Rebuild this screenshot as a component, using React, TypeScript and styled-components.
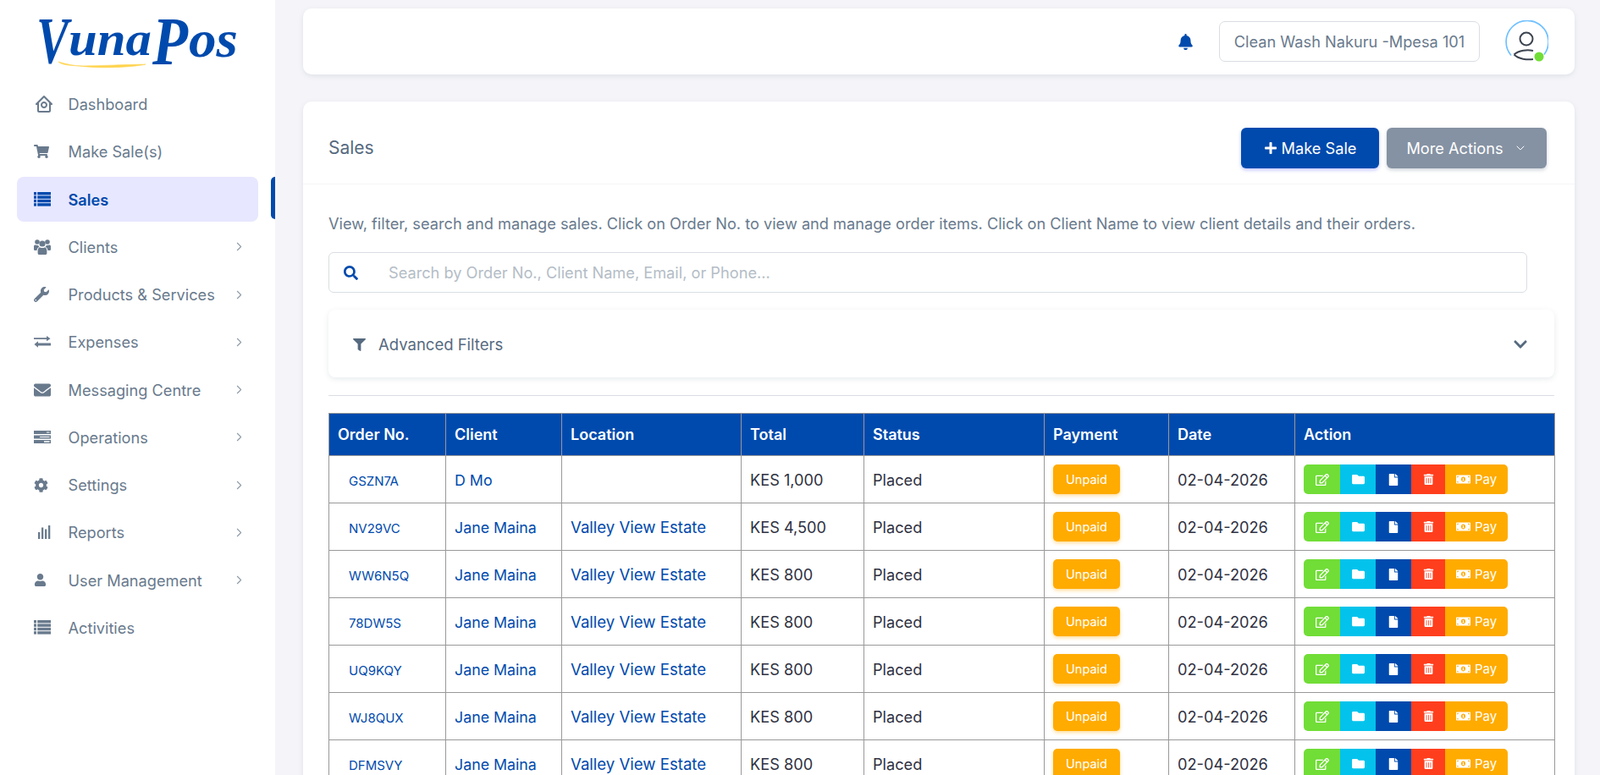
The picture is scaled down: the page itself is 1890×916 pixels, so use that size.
import React from 'react'
import styled, { createGlobalStyle } from 'styled-components'
import { BiHomeCircle } from 'react-icons/bi'
import { ChevronRight, ChevronDown } from 'lucide-react'
import {
  FaShoppingCart,
  FaWrench,
  FaEnvelope,
  FaCog,
  FaUser,
  FaSearch,
  FaFilter,
  FaBell,
  FaPlus,
  FaFolder,
  FaFile,
  FaTrashAlt,
  FaMoneyBillAlt,
  FaRegEdit,
  FaChevronDown,
} from 'react-icons/fa'

const PRIMARY = '#004aad'
const FONT = `Inter, "Open Sans", sans-serif`

const GlobalStyle = createGlobalStyle`
  * { box-sizing: border-box; }
  html, body { margin: 0; height: 100%; overflow: hidden; }
  body { background: #f5f5f9; font-family: ${FONT}; color: #697a8d; }
`

const ListIcon = () => (
  <svg width='20' height='17' viewBox='0 0 20 17' fill='currentColor'>
    {[0, 4.4, 8.8, 13.2].map((y) => (
      <g key={y}>
        <rect x='0' y={y} width='3' height='3.4' />
        <rect x='4.2' y={y} width='15.8' height='3.4' />
      </g>
    ))}
  </svg>
)

const UsersIcon = () => (
  <svg width='20' height='20' viewBox='0 0 20 20' fill='currentColor'>
    <circle cx='4' cy='4' r='2.8' />
    <circle cx='16' cy='4' r='2.8' />
    <circle cx='10' cy='6' r='3.6' />
    <path d='M0 9.2C0 7.8 1 7.2 2 7.5c1.2.5 2.3.5 3 .2.4 1 1 1.6 1.4 2C4.6 10.6 3.7 12 3.5 14H1c-.7 0-1-.5-1-1.2Z' />
    <path d='M20 9.2c0-1.4-1-2-2-1.7-1.2.5-2.3.5-3 .2-.4 1-1 1.6-1.4 2 1.8.9 2.7 2.3 2.9 4.3H19c.7 0 1-.5 1-1.2Z' />
    <path d='M4.6 14.8c0-2.6 1-4.2 2.3-4.6 1.9 1.2 4.3 1.2 6.2 0 1.3.4 2.3 2 2.3 4.6v2.4c0 1-.8 1.8-1.8 1.8H6.4c-1 0-1.8-.8-1.8-1.8Z' />
  </svg>
)

const ExchangeIcon = () => (
  <svg width='20' height='14' viewBox='0 0 20 14' fill='currentColor'>
    <path d='M0 2.2h15V0l4.5 3.2L15 6.2V4H0Z' />
    <path d='M20 8.2H5V6L.5 9.9 5 13.6v-2.2h15Z' transform='translate(0 .2)' />
  </svg>
)

const ServerIcon = () => (
  <svg width='20' height='15' viewBox='0 0 20 15' fill='currentColor'>
    <path d='M0 0h20v4H15v-1.4h3.6V1.4H15V4H0Z' />
    <path d='M0 5.5h20v4h-7V8h5.6V6.9H7v1.2h6v1.4H0Z' />
    <path d='M0 11h20v4H0Zm12 1.2v1.5h6.6v-1.5Z' fillRule='evenodd' />
  </svg>
)

const ReportsIcon = () => (
  <svg width='20' height='18' viewBox='0 0 20 18' fill='currentColor'>
    <rect x='5' y='9' width='2.3' height='8' />
    <rect x='9' y='3.5' width='2.3' height='13.5' />
    <rect x='13' y='5.5' width='2.3' height='11.5' />
    <rect x='17' y='1' width='2.3' height='16' />
  </svg>
)

const menu = [
  { label: 'Dashboard', icon: <BiHomeCircle size={24} /> },
  { label: 'Make Sale(s)', icon: <FaShoppingCart size={18} /> },
  { label: 'Sales', icon: <ListIcon />, active: true },
  { label: 'Clients', icon: <UsersIcon />, sub: true },
  { label: 'Products & Services', icon: <FaWrench size={18} />, sub: true },
  { label: 'Expenses', icon: <ExchangeIcon />, sub: true },
  { label: 'Messaging Centre', icon: <FaEnvelope size={20} />, sub: true },
  { label: 'Operations', icon: <ServerIcon />, sub: true },
  { label: 'Settings', icon: <FaCog size={17} />, sub: true },
  { label: 'Reports', icon: <ReportsIcon />, sub: true },
  { label: 'User Management', icon: <FaUser size={15} />, sub: true },
  { label: 'Activities', icon: <ListIcon /> },
]

const rows = [
  ['GSZN7A', 'D Mo', '', 'KES 1,000'],
  ['NV29VC', 'Jane Maina', 'Valley View Estate', 'KES 4,500'],
  ['WW6N5Q', 'Jane Maina', 'Valley View Estate', 'KES 800'],
  ['78DW5S', 'Jane Maina', 'Valley View Estate', 'KES 800'],
  ['UQ9KQY', 'Jane Maina', 'Valley View Estate', 'KES 800'],
  ['WJ8QUX', 'Jane Maina', 'Valley View Estate', 'KES 800'],
  ['DFMSVY', 'Jane Maina', 'Valley View Estate', 'KES 800'],
]

const columns = [
  ['Order No.', 138],
  ['Client', 137],
  ['Location', 212],
  ['Total', 145],
  ['Status', 213],
  ['Payment', 147],
  ['Date', 149],
  ['Action', 307],
] as const

const Logo = () => (
  <LogoSvg viewBox='0 0 238 60' width='238' height='60'>
    <g fill={PRIMARY} fontFamily='"Liberation Serif", serif' fontStyle='italic' fontWeight='700'>
      <text x='0' y='54' fontSize='78' textLength='38' lengthAdjust='spacingAndGlyphs'>V</text>
      <text x='38' y='45' fontSize='58' textLength='98' lengthAdjust='spacingAndGlyphs'>una</text>
      <text x='137' y='56' fontSize='80' textLength='42' lengthAdjust='spacingAndGlyphs'>P</text>
      <text x='180' y='47' fontSize='62' textLength='58' lengthAdjust='spacingAndGlyphs'>os</text>
    </g>
    <path d='M26 53 C34 61 70 57 129 56 C118 59 60 64 26 53 Z' fill='#ffd34d' stroke='#ffd34d' strokeWidth='.6' />
  </LogoSvg>
)

const Avatar = () => (
  <AvatarWrap>
    <svg width='51' height='51' viewBox='0 0 51 51' fill='none'>
      <path d='M7 41.5 A25 25 0 1 1 46 40.5' stroke='#6fc0ff' strokeWidth='1.7' />
      <circle cx='25' cy='22' r='7.5' stroke='#3c4350' strokeWidth='2' />
      <path d='M10.5 40.5 C16 35.5 26 34.5 33 36 M10.5 40.5 C16 46 26 47 33 46' stroke='#3c4350' strokeWidth='2' />
      <circle cx='40' cy='43' r='5.5' fill='#71dd37' />
    </svg>
  </AvatarWrap>
)

const App: React.FC = () => (
  <>
    <GlobalStyle />
    <Shell>
      <Sidebar>
        <LogoBox>
          <Logo />
        </LogoBox>
        <Menu>
          {menu.map((m) => (
            <MenuItem key={m.label} $active={m.active}>
              <MenuIcon>{m.icon}</MenuIcon>
              <span>{m.label}</span>
              {m.sub && (
                <MenuArrow>
                  <ChevronRight size={17} strokeWidth={1.5} />
                </MenuArrow>
              )}
            </MenuItem>
          ))}
        </Menu>
      </Sidebar>

      <Main>
        <TopBar>
          <BellBtn>
            <FaBell size={19} />
          </BellBtn>
          <StoreBox>Clean Wash Nakuru -Mpesa 101</StoreBox>
          <Avatar />
        </TopBar>

        <Card>
          <CardHeader>
            <CardTitle>Sales</CardTitle>
            <HeaderActions>
              <MakeSaleBtn>
                <FaPlus size={16} />
                Make Sale
              </MakeSaleBtn>
              <MoreBtn>
                More Actions
                <ChevronDown size={16} strokeWidth={1.5} />
              </MoreBtn>
            </HeaderActions>
          </CardHeader>

          <CardBody>
            <Intro>
              View, filter, search and manage sales. Click on Order No. to view and manage order items. Click on Client
              Name to view client details and their orders.
            </Intro>

            <SearchBox>
              <SearchIcon>
                <FaSearch size={17} />
              </SearchIcon>
              <SearchInput placeholder='Search by Order No., Client Name, Email, or Phone...' />
            </SearchBox>

            <FilterPanel>
              <FilterLabel>
                <FaFilter size={15} />
                Advanced Filters
              </FilterLabel>
              <FaChevronDown size={18} />
            </FilterPanel>

            <Rule />

            <SalesTable>
              <colgroup>
                {columns.map(([name, width]) => (
                  <col key={name} width={width} />
                ))}
              </colgroup>
              <thead>
                <tr>
                  {columns.map(([name]) => (
                    <th key={name}>{name}</th>
                  ))}
                </tr>
              </thead>
              <tbody>
                {rows.map(([order, client, location, total]) => (
                  <tr key={order}>
                    <td>
                      <OrderLink>{order}</OrderLink>
                    </td>
                    <td>
                      <ClientLink>{client}</ClientLink>
                    </td>
                    <td>
                      <CellLink>{location}</CellLink>
                    </td>
                    <td>{total}</td>
                    <td>Placed</td>
                    <td>
                      <UnpaidBadge>Unpaid</UnpaidBadge>
                    </td>
                    <td>02-04-2026</td>
                    <td>
                      <ActionGroup>
                        <ActionBtn $bg='#71dd37' $w={43}>
                          <FaRegEdit size={16} />
                        </ActionBtn>
                        <ActionBtn $bg='#03c3ec' $w={42}>
                          <FaFolder size={15} />
                        </ActionBtn>
                        <ActionBtn $bg={PRIMARY} $w={42}>
                          <FaFile size={14} />
                        </ActionBtn>
                        <ActionBtn $bg='#ff3e1d' $w={40}>
                          <FaTrashAlt size={13} />
                        </ActionBtn>
                        <ActionBtn $bg='#ffab00' $w={74}>
                          <FaMoneyBillAlt size={17} />
                          Pay
                        </ActionBtn>
                      </ActionGroup>
                    </td>
                  </tr>
                ))}
              </tbody>
            </SalesTable>
          </CardBody>
        </Card>
      </Main>
    </Shell>
  </>
)

export default App

const Shell = styled.div`
  display: flex;
  height: 100vh;
  overflow: hidden;
`

const Sidebar = styled.aside`
  flex: 0 0 325px;
  background: #fff;
  padding: 0 20px;
`

const LogoBox = styled.div`
  height: 96.5px;
  padding: 20px 0 0 23px;
`

const LogoSvg = styled.svg`
  display: block;
  overflow: visible;
`

const Menu = styled.nav`
  display: flex;
  flex-direction: column;
  gap: 3.25px;
`

const MenuItem = styled.div<{ $active?: boolean }>`
  position: relative;
  display: flex;
  align-items: center;
  height: 53px;
  padding: 0 14px 0 20px;
  border-radius: 8px;
  font-size: 18.2px;
  font-weight: ${({ $active }) => ($active ? 600 : 400)};
  color: ${({ $active }) => ($active ? PRIMARY : '#697a8d')};
  background: ${({ $active }) => ($active ? '#e7e7ff' : 'transparent')};

  ${({ $active }) =>
    $active &&
    `
    &::after {
      content: '';
      position: absolute;
      top: 0;
      right: -20px;
      width: 5px;
      height: 50px;
      background: ${PRIMARY};
      border-radius: 5px 0 0 5px;
    }
  `}
`

const MenuIcon = styled.span`
  flex: 0 0 40.5px;
  display: flex;
  align-items: center;
`

const MenuArrow = styled.span`
  margin-left: auto;
  display: flex;
  color: #8d9aa8;
`

const Main = styled.main`
  flex: 1;
  min-width: 0;
  padding: 10px 30px 0 33px;
`

const TopBar = styled.header`
  display: flex;
  align-items: center;
  justify-content: flex-end;
  height: 78px;
  padding: 0 31px 0 0;
  background: #fff;
  border-radius: 10px;
  box-shadow: 0 2px 6px rgba(67, 89, 113, 0.12);
`

const BellBtn = styled.span`
  display: flex;
  margin-right: 30px;
  color: ${PRIMARY};
`

const StoreBox = styled.div`
  width: 308px;
  height: 48px;
  margin-right: 30px;
  border: 1px solid #d9dee3;
  border-radius: 7px;
  display: flex;
  align-items: center;
  justify-content: center;
  font-size: 18.2px;
  color: #697a8d;
`

const AvatarWrap = styled.div`
  display: flex;
  width: 51px;
  height: 51px;
`

const Card = styled.section`
  margin-top: 32px;
  background: #fff;
  border-radius: 10px;
  box-shadow: 0 2px 6px rgba(67, 89, 113, 0.12);
`

const CardHeader = styled.div`
  display: flex;
  align-items: center;
  justify-content: space-between;
  height: 98px;
  padding: 12px 33px 0 30px;
  border-bottom: 1px solid #f5f5f9;
`

const CardTitle = styled.h5`
  margin: 0;
  font-size: 21px;
  font-weight: 400;
  color: #566a7f;
`

const HeaderActions = styled.div`
  display: flex;
  gap: 9px;
`

const HeaderBtn = styled.button`
  display: flex;
  align-items: center;
  justify-content: center;
  height: 48px;
  border: 0;
  border-radius: 6px;
  color: #fff;
  font-family: ${FONT};
  font-size: 18.2px;
`

const MakeSaleBtn = styled(HeaderBtn)`
  width: 163px;
  gap: 5px;
  background: ${PRIMARY};
  box-shadow: 0 2px 4px rgba(105, 108, 255, 0.4);
`

const MoreBtn = styled(HeaderBtn)`
  width: 189px;
  gap: 12px;
  background: #8592a3;
  box-shadow: 0 2px 4px rgba(133, 146, 163, 0.4);
`

const CardBody = styled.div`
  padding: 32px 24px 0 30px;
`

const Intro = styled.p`
  margin: 0;
  font-size: 18.2px;
  line-height: 29px;
  padding-bottom: 1px;
  color: #697a8d;
`

const SearchBox = styled.div`
  display: flex;
  align-items: center;
  width: 1416px;
  height: 48px;
  margin-top: 18px;
  border: 1px solid #d9dee3;
  border-radius: 6px;
`

const SearchIcon = styled.span`
  flex: 0 0 68px;
  display: flex;
  padding-left: 17px;
  color: ${PRIMARY};
`

const SearchInput = styled.input`
  flex: 1;
  border: 0;
  outline: 0;
  padding: 0 2px;
  background: transparent;
  font-family: ${FONT};
  font-size: 18.2px;
  color: #697a8d;

  &::placeholder {
    color: #b4bdc6;
  }
`

const FilterPanel = styled.div`
  display: flex;
  align-items: center;
  justify-content: space-between;
  height: 80px;
  margin-top: 20px;
  padding: 2px 31px 0 29px;
  border-radius: 8px;
  background: #fff;
  color: #566a7f;
  box-shadow: 0 2px 6px rgba(67, 89, 113, 0.12);
`

const FilterLabel = styled.div`
  display: flex;
  align-items: center;
  gap: 15px;
  font-size: 18.5px;
`

const Rule = styled.hr`
  margin: 21px 0 20px;
  border: 0;
  border-top: 1px solid #d9dee3;
`

const SalesTable = styled.table`
  width: 1448px;
  table-layout: fixed;
  border-collapse: collapse;
  font-size: 18.2px;
  color: #2f3142;

  th,
  td {
    border: 1px solid #999;
    padding: 0 10px;
    text-align: left;
  }

  th {
    height: 50px;
    background: ${PRIMARY};
    color: #fff;
    font-size: 18px;
    font-weight: 600;
  }

  td {
    height: 56px;
  }
`

const CellLink = styled.a`
  color: ${PRIMARY};
  font-size: 18.6px;
`

const ClientLink = styled(CellLink)`
  font-size: 17.8px;
`

const OrderLink = styled(CellLink)`
  display: inline-block;
  padding-left: 13px;
  font-size: 15px;
`

const UnpaidBadge = styled.span`
  display: flex;
  align-items: center;
  justify-content: center;
  width: 79px;
  height: 35px;
  border-radius: 5px;
  background: #ffab00;
  color: #fff;
  font-size: 14.5px;
  box-shadow: 0 2px 4px rgba(255, 171, 0, 0.4);
`

const ActionGroup = styled.div`
  display: flex;
  width: fit-content;
  border-radius: 5px;
  overflow: hidden;
`

const ActionBtn = styled.span<{ $bg: string; $w: number }>`
  display: flex;
  align-items: center;
  justify-content: center;
  gap: 5px;
  width: ${({ $w }) => $w}px;
  height: 35px;
  background: ${({ $bg }) => $bg};
  color: #fff;
  font-size: 15px;
`
